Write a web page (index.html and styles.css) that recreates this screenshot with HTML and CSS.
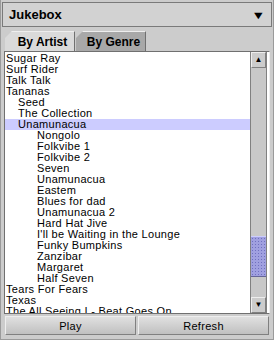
FILE: index.html
```html
<!DOCTYPE html>
<html lang="en">
<head>
  <meta charset="UTF-8">
  <title>Jukebox</title>
  <link rel="stylesheet" href="styles.css">
</head>
<body>

  <div class="frame">
    <div class="titlebar">
      <span class="title">Jukebox</span>
      <span class="drop">&#9660;</span>
    </div>

    <div class="tabs">
      <div class="tab active">By Artist</div>
      <div class="tab">By Genre</div>
    </div>

    <div class="panel">
      <ul class="list">
        <li>Sugar Ray</li>
        <li>Surf Rider</li>
        <li>Talk Talk</li>
        <li>Tananas</li>
        <li class="l1">Seed</li>
        <li class="l1">The Collection</li>
        <li class="l1 selected">Unamunacua</li>
        <li class="l2">Nongolo</li>
        <li class="l2">Folkvibe 1</li>
        <li class="l2">Folkvibe 2</li>
        <li class="l2">Seven</li>
        <li class="l2">Unamunacua</li>
        <li class="l2">Eastem</li>
        <li class="l2">Blues for dad</li>
        <li class="l2">Unamunacua 2</li>
        <li class="l2">Hard Hat Jive</li>
        <li class="l2">I'll be Waiting in the Lounge</li>
        <li class="l2">Funky Bumpkins</li>
        <li class="l2">Zanzibar</li>
        <li class="l2">Margaret</li>
        <li class="l2">Half Seven</li>
        <li>Tears For Fears</li>
        <li>Texas</li>
        <li>The All Seeing I - Beat Goes On</li>
      </ul>
      <div class="scrollbar">
        <div class="arrow">&#9650;</div>
        <div class="track">
          <div class="thumb"></div>
        </div>
        <div class="arrow">&#9660;</div>
      </div>
    </div>

    <div class="buttons">
      <button>Play</button>
      <button>Refresh</button>
    </div>
  </div>

</body>
</html>
```

FILE: styles.css
```css
body {
  margin: 0;
  padding: 0;
  background: #cccccc;
  font-family: "Liberation Sans", Arial, sans-serif;
  color: #000;
}

.frame {
  width: 274px;
  height: 340px;
  box-sizing: border-box;
  border-left: 1px solid #9a9a9a;
  border-right: 1px solid #9a9a9a;
  border-bottom: 1px solid #9a9a9a;
  padding: 2px 1px 0 1px;
  display: flex;
  flex-direction: column;
}

.titlebar {
  height: 25px;
  box-sizing: border-box;
  border: 1px solid #7a7a7a;
  background: #d2d2d2;
  display: flex;
  align-items: center;
  justify-content: space-between;
  padding: 0 7px 0 6px;
}

.title {
  font-size: 13px;
  font-weight: bold;
}

.drop {
  font-size: 11px;
  transform: scaleX(1.3);
}

/* tab strip */
.tabs {
  display: flex;
  margin-top: 4px;
  padding-left: 3px;
  height: 20px;
}

.tab {
  width: 70px;
  box-sizing: border-box;
  font-size: 12px;
  font-weight: bold;
  text-align: center;
  line-height: 20px;
  padding-left: 6px;
  background: #a8a8a8;
  border-top: 1px solid #eeeeee;
  border-right: 1px solid #707070;
  clip-path: polygon(7px 0, 100% 0, 100% 100%, 0 100%, 0 7px);
  margin-right: 1px;
}

.tab.active {
  background: #dadada;
}

.panel {
  height: 263px;
  box-sizing: border-box;
  margin: 0 2px 0 2px;
  border: 1px solid #707070;
  border-right-color: #eeeeee;
  background: #fff;
  display: flex;
}

.list {
  flex: 1;
  list-style: none;
  margin: 0;
  padding: 1px 0 0 0;
  overflow: hidden;
  font-size: 11px;
  letter-spacing: 0.3px;
}

.list li {
  height: 11px;
  line-height: 11px;
  padding-left: 1px;
  white-space: nowrap;
}

.list li.l1 {
  padding-left: 13px;
}

.list li.l2 {
  padding-left: 32px;
}

.list li.selected {
  background: #ccccff;
}

.scrollbar {
  width: 15px;
  margin-right: 2px;
  background: #c8c8c8;
  border-left: 1px solid #808080;
  border-right: 1px solid #808080;
  display: flex;
  flex-direction: column;
}

.arrow {
  height: 16px;
  box-sizing: border-box;
  border: 1px solid #eeeeee;
  border-right-color: #808080;
  border-bottom-color: #808080;
  background: #cccccc;
  font-size: 8px;
  line-height: 14px;
  text-align: center;
}

.track {
  flex: 1;
  display: flex;
  flex-direction: column;
  justify-content: flex-end;
  padding-bottom: 20px;
}

.thumb {
  height: 39px;
  background-color: #a0a0e0;
  background-image: radial-gradient(#7070c0 30%, transparent 40%);
  background-size: 3px 3px;
  border-top: 1px solid #ccccff;
  border-bottom: 1px solid #666699;
}

.buttons {
  display: flex;
  gap: 2px;
  margin: 2px 3px 0 3px;
}

button {
  flex: 1;
  height: 19px;
  padding: 0;
  font-family: "Liberation Sans", Arial, sans-serif;
  font-size: 11px;
  letter-spacing: 0.3px;
  color: #000;
  border: 1px solid #808080;
  border-top-color: #eeeeee;
  border-left-color: #eeeeee;
  background: linear-gradient(#e0e0e0, #c0c0c0);
}
```
